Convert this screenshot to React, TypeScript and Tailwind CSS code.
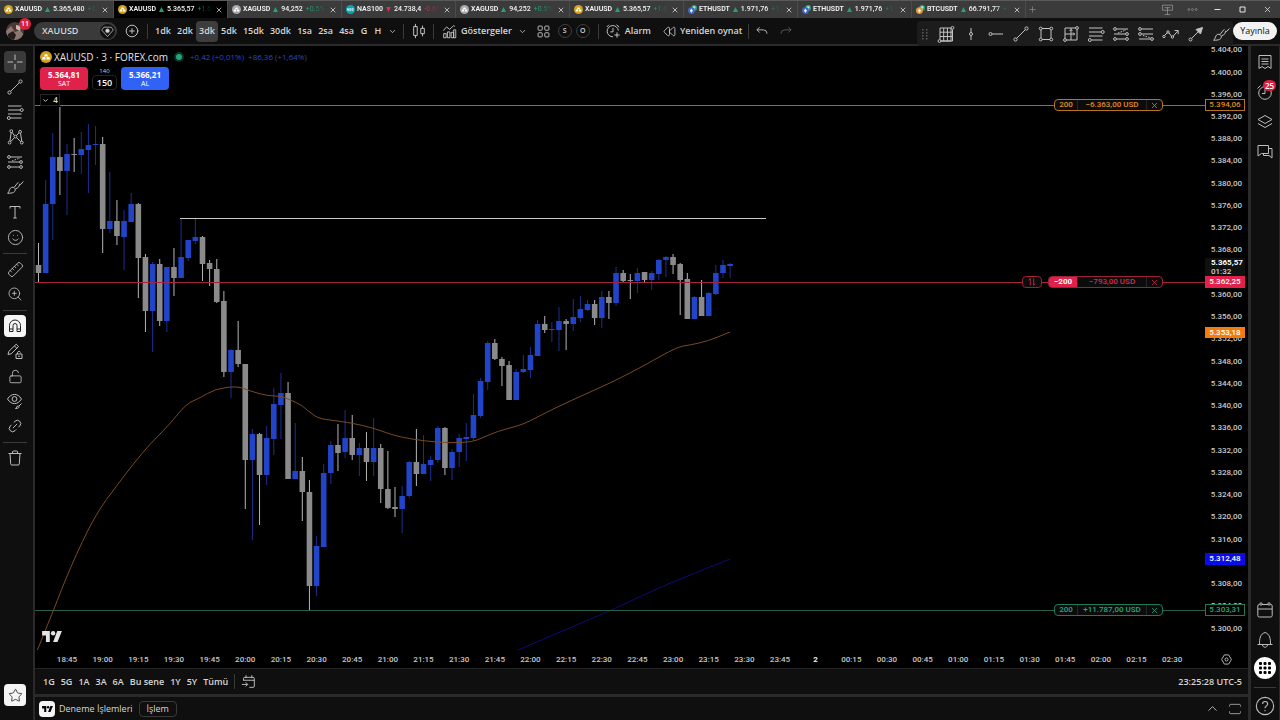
import type { ReactNode } from "react"
import { ChevronDown, ChevronUp, CirclePlus, Link2, LockOpen, Plus, Rewind, Ruler, Smile, Star, X, ZoomIn } from "lucide-react"

function Icon({ children, className = "size-[18px]" }: { children: ReactNode; className?: string }) {
  return (
    <svg viewBox="0 0 18 18" fill="none" stroke="currentColor" strokeWidth="1" className={`${className} shrink-0`} aria-hidden="true">
      {children}
    </svg>
  )
}

/* ---------- drawing tool icons ---------- */

const crossIcon = <Icon><path d="M9 1.5V7M9 11v5.5M1.5 9H7M11 9h5.5" /></Icon>

const trendIcon = (
  <Icon><circle cx="3.5" cy="14.5" r="1.6" /><circle cx="14.5" cy="3.5" r="1.6" /><path d="M4.7 13.3l8.6-8.6" /></Icon>
)

const fibIcon = (
  <Icon>
    <path d="M2 3h13.5M2 7h12M2 11h13.5M4.5 15h11" />
    <circle cx="15.7" cy="7" r="1.5" /><circle cx="2.8" cy="15" r="1.5" />
  </Icon>
)

const patternIcon = (
  <Icon>
    <path d="M3.9 13.2l1.3-8.7M6.2 4.4l2.2 3.2M10.4 7.6l2.7-2.8M14.5 5.2l1.3 8M4.8 13.6l3.6-4M10.6 9.7l4.2 4" />
    <circle cx="3.6" cy="14.6" r="1.4" /><circle cx="5.3" cy="3.2" r="1.4" /><circle cx="9.5" cy="8.6" r="1.4" />
    <circle cx="14.1" cy="3.8" r="1.4" /><circle cx="15.8" cy="14.6" r="1.4" />
  </Icon>
)

const longIcon = (
  <Icon>
    <circle cx="3" cy="4" r="1.4" /><circle cx="3" cy="14" r="1.4" /><circle cx="15" cy="14" r="1.4" />
    <path d="M4.5 4H16M4.5 14h9M2 9h11.5" /><circle cx="15" cy="9" r="1.4" /><path strokeDasharray="1.5 1.2" d="M6 8l8-3" />
  </Icon>
)

const shortIcon = (
  <Icon>
    <circle cx="3" cy="4" r="1.4" /><circle cx="3" cy="9" r="1.4" /><circle cx="15" cy="14" r="1.4" />
    <path d="M4.5 4H16M4.5 9H16M2 14h11.5" /><path strokeDasharray="1.5 1.2" d="M6 10.5l8 2.5" />
  </Icon>
)

const brushIcon = (
  <Icon>
    <path d="M1.7 15.3c2-1.8 1.4-5.2 4-6 1.7-.5 3.6.6 3.6 2.5 0 2.4-2.6 3.5-7.6 3.500zM8.3 9.3c1-1.6 2.3-3.2 4-5M9.6 11c1.5-.7 2.6-1.6 3.5-2.6l.5-2.2 1.2.2 2.5-2.9" />
  </Icon>
)

const textIcon = <Icon><path d="M4 5.5V3.5h10v2M9 3.5V15M7.3 15h3.4" /></Icon>

const magnetIcon = (
  <Icon>
    <path d="M3.5 14.5v-6a5.5 5.5 0 0 1 11 0v6H11v-6a2 2 0 0 0-4 0v6zM3.5 12H7M11 12h3.5" />
  </Icon>
)

const pencilLockIcon = (
  <Icon>
    <path d="M2 12.5l.7-3 7.500-7.300 2.300 2.300-7.300 7.300zM8.500 4l2.300 2.300M10 12h6v4.500h-6zM11.500 12v-1.500a1.600 1.600 0 0 1 3 0" />
    <circle cx="13" cy="14.2" r=".4" />
  </Icon>
)

const eyeIcon = (
  <Icon>
    <path d="M1.5 7c2-3.200 4.600-4.600 7-4.600s5 1.400 7 4.600c-2 3.200-4.600 4.600-7 4.600S3.500 10.200 1.500 7z" /><circle cx="8.5" cy="7" r="2.4" />
    <path d="M9.5 16.5c1.500-.6.8-2.500 2.500-2.500s1.800 2.500-2.500 2.500zM13 14l2.500-2.500" />
  </Icon>
)

const trashIcon = <Icon><path d="M2.5 4.5h13M6.5 4.5V3a1 1 0 0 1 1-1h3a1 1 0 0 1 1 1v1.5M4 4.5l.7 10.300a1.200 1.200 0 0 0 1.200 1.200h6.200a1.200 1.200 0 0 0 1.200-1.200L14 4.500" /></Icon>

const gannIcon = (
  <Icon>
    <path d="M3 3h11v13H3zM6.7 3v13M10.4 3v13M3 7.2h12.5M3 11.5h12.5M15.5 4.5V16H4" />
    <circle cx="15.5" cy="2.8" r="1.4" fill="#1e1e1e" /><circle cx="2.5" cy="16" r="1.4" fill="#1e1e1e" />
  </Icon>
)

const vertIcon = <Icon><circle cx="9" cy="9" r="1.5" /><path d="M9 3v4.5M9 10.5V15" /></Icon>
const rayIcon = <Icon><circle cx="3.5" cy="9" r="1.5" /><path d="M5 9h11" /></Icon>

const rectIcon = (
  <Icon>
    <path d="M4 5v8M14 5v8M5 3.5h8M5 14.5h8" />
    <circle cx="3.7" cy="3.5" r="1.4" /><circle cx="14.3" cy="3.5" r="1.4" /><circle cx="3.7" cy="14.5" r="1.4" /><circle cx="14.3" cy="14.5" r="1.4" />
  </Icon>
)

const rangeIcon = (
  <Icon>
    <path d="M3 3h10.500M15 4.500V15H4M3 3v10.500M3 9h10M9 3v12M7.500 6L9 4.500 10.500 6M11 7.500L12.500 9 11 10.500" />
    <circle cx="15" cy="3" r="1.4" /><circle cx="3" cy="15" r="1.4" />
  </Icon>
)

const zigIcon = (
  <Icon>
    <path d="M2.5 10.5l2.7-2.700M7 7.800l2.500 3.500M11.300 11l4.500-5M12.500 5.500h3.700v3.700" />
    <circle cx="2" cy="11.5" r="1.2" /><circle cx="6" cy="7" r="1.2" /><circle cx="10.4" cy="12" r="1.2" />
  </Icon>
)

const arrowIcon = (
  <Icon><circle cx="3.5" cy="14.5" r="1.5" /><path d="M4.6 13.4L14 4" /><path fill="currentColor" d="M15.5 2.5L13.5 9 9 4.5z" /></Icon>
)

/* ---------- top bar icons ---------- */

const candlesIcon = <Icon className="size-[16px]"><path d="M5 1v3M5 14v3M3 4h4v10H3zM13 3v3M13 12v3M11 6h4v6h-4z" /></Icon>
const indicatorIcon = (
  <Icon className="size-[15px]"><path d="M2 16.5v-5h3v5zM6.5 16.5v-7h3v7zM11 16.5V10h3v6.5zM14 16.5V7h2.5v9.5zM1.5 8l4-4.5 3.5 3 5-4.5 1.5 1" /></Icon>
)
const gridIcon = (
  <Icon className="size-[15px]"><rect x="2.5" y="2.5" width="5" height="5" rx="1" /><rect x="10.5" y="2.5" width="5" height="5" rx="1" /><rect x="2.5" y="10.5" width="5" height="5" rx="1" /><rect x="10.5" y="10.5" width="5" height="5" rx="1" /></Icon>
)
const alarmAddIcon = (
  <Icon className="size-[16px]"><path d="M15 8.5A6.3 6.3 0 1 0 9 15.5M9 5.5V10H6M2 4.5L4.5 2M13 2l3 2.5M13.5 10.5v6M10.5 13.5h6" /></Icon>
)
const undoIcon = <Icon className="size-[14px]"><path d="M6 4L2.5 7.5 6 11M2.5 7.5h8a5 5 0 0 1 5 5" /></Icon>
const redoIcon = <Icon className="size-[14px]"><path d="M12 4l3.5 3.5L12 11M15.5 7.5h-8a5 5 0 0 0-5 5" /></Icon>

/* ---------- right bar icons ---------- */

const listIcon = <Icon><path d="M3 2.5h12v13l-3-2-3 2-3-2-3 2zM5.5 6h7M5.5 8.5h7M5.5 11h7" /></Icon>
const alarmIcon = <Icon><circle cx="9" cy="10" r="6.3" /><path d="M9 6v4.5H6M1.5 5.5L4.5 2.5" /></Icon>
const layersIcon = <Icon><path d="M9 2.5l7 4-7 4-7-4zM2 10.500l7 4 7-4" /></Icon>
const chatIcon = <Icon><path d="M2 2.5h10.5v8h-7L2 13zM12.5 5.5H16V15l-3-2.500H7.500v-2" /></Icon>
const calendarIcon = <Icon><rect x="1.8" y="3.5" width="14.4" height="12.5" rx="1.5" /><path d="M2 8h14" /><circle cx="5" cy="3" r="1.2" fill="#0f0f0f" /><circle cx="13" cy="3" r="1.2" fill="#0f0f0f" /></Icon>
const bellIcon = <Icon><path d="M3.5 13c0-5 .5-10 5.5-11.5 5 1.5 5.5 6.5 5.5 11.500M1.500 13.500h15M6.500 14c.5 3 4.500 3 5 0" /></Icon>
const helpIcon = <Icon className="size-[20px]"><circle cx="9" cy="9" r="7.8" /><path d="M6.8 7.2c0-3 4.600-3 4.600 0 0 1.800-2.400 1.700-2.400 3.800M9 12.500v1.200" /></Icon>
const goToIcon = <Icon className="size-[15px]"><path d="M3 8V5.5A1.5 1.5 0 0 1 4.5 4h10A1.5 1.5 0 0 1 16 5.5v9a1.5 1.5 0 0 1-1.5 1.5H10M3 7.5h13M6 1.5V5M13 1.5V5M1 12.500h7M5.500 10L8 12.500 5.500 15" /></Icon>

function TvLogo({ className }: { className: string }) {
  return (
    <svg viewBox="0 0 36 20" className={className} fill="currentColor" aria-hidden="true">
      <path d="M14 20H7V8H0V0h14zM28 20h-8l7.5-20H36z" />
      <circle cx="20" cy="4" r="4" />
    </svg>
  )
}

/* ---------- tabs ---------- */

type Coin = "gold" | "silver" | "nas" | "eth" | "btc"

function CoinIcon({ coin, className = "size-[9px]" }: { coin: Coin; className?: string }) {
  if (coin === "eth" || coin === "btc") {
    return (
      <svg viewBox="0 0 10 10" className={`${className} shrink-0`} aria-hidden="true">
        <circle cx="6.8" cy="3.2" r="3.2" fill="#26a17b" />
        <path d="M5.2 2.2h3.2M6.8 2.2V5" stroke="#fff" />
        <circle cx="3.8" cy="6.2" r="3.8" fill={coin === "eth" ? "#3f68c8" : "#e8963a"} />
        <path d="M3.8 3.8l1.6 2.5-1.6 2.2-1.6-2.200z" fill="#fff" />
      </svg>
    )
  }
  const fill = coin === "gold" ? "#d3a21c" : coin === "silver" ? "#a5a7ad" : "#0aa5b5"
  return (
    <svg viewBox="0 0 12 12" className={`${className} shrink-0`} aria-hidden="true">
      <circle cx="6" cy="6" r="6" fill={fill} />
      {coin === "nas" ? (
        <path d="M2 7.5v-3l1.500 3v-3M5 4.500h1.500v3H5zM8 4.500h1.500v3H8z" stroke="#fff" strokeWidth=".8" fill="none" />
      ) : (
        <path d="M4.8 3.2h2.4L8 5.5H4zM2.7 6h2.500l.5 2.500H2zM6.800 6h2.500l.7 2.500H6.300z" fill="#fff" />
      )}
    </svg>
  )
}

const tabs: { coin: Coin; name: string; price: string; change: string; down?: boolean; active?: boolean }[] = [
  { coin: "gold", name: "XAUUSD", price: "5.365,480", change: "+1.63%" },
  { coin: "gold", name: "XAUUSD", price: "5.365,57", change: "+1.64%", active: true },
  { coin: "silver", name: "XAGUSD", price: "94,252", change: "+0.5% / 1" },
  { coin: "nas", name: "NAS100", price: "24.738,4", change: "-0.69%", down: true },
  { coin: "silver", name: "XAGUSD", price: "94,252", change: "+0.5% / 1" },
  { coin: "gold", name: "XAUUSD", price: "5.365,57", change: "+1.64%" },
  { coin: "eth", name: "ETHUSDT", price: "1.971,76", change: "+1.63%" },
  { coin: "eth", name: "ETHUSDT", price: "1.971,76", change: "+1.63%" },
  { coin: "btc", name: "BTCUSDT", price: "66.791,77", change: "+1.5%" },
]

function TabBar() {
  return (
    <div className="flex h-[18px] shrink-0 items-stretch border-t border-[#5a5a5a] bg-[#3b3b3b] font-[Roboto,sans-serif] text-[7px] text-gray-100">
      {tabs.map((t, i) => (
        <div
          key={i}
          className={`flex w-[114px] shrink-0 items-center border-r border-[#4c4c4c] pl-1 pr-1 ${t.active ? "bg-black" : ""}`}
        >
          <CoinIcon coin={t.coin} />
          <div className="ml-0.5 flex min-w-0 flex-1 items-center gap-[3px] overflow-hidden whitespace-nowrap mask-r-from-80%">
            <span className="font-semibold">{t.name}</span>
            <svg viewBox="0 0 6 6" className={`size-[5px] shrink-0 ${t.down ? "fill-[#d9304f]" : "fill-[#23a07a]"}`} aria-hidden="true">
              <path d={t.down ? "M0 0h6L3 6z" : "M0 6h6L3 0z"} />
            </svg>
            <span className="font-medium">{t.price}</span>
            <span className={t.down ? "text-[#d9304f]" : "text-[#23a07a]"}>{t.change}</span>
          </div>
          <button aria-label="Close tab" className="ml-0.5"><X size={8} /></button>
        </div>
      ))}
      <button aria-label="New tab" className="px-0.5 text-[#8a8a8a]"><Plus size={9} /></button>
      <div className="ml-auto flex items-center text-gray-200">
        <button aria-label="Panels" className="flex w-[25px] justify-center text-[#9a9a9a]">
          <Icon className="size-[13px]"><path d="M2 3h14v7H2zM9 6v10M5 16h8M5 6.5h8" /></Icon>
        </button>
        <button aria-label="More" className="flex w-[25px] justify-center text-[#9a9a9a]">
          <Icon className="size-[11px]"><circle cx="3" cy="9" r="1.6" /><circle cx="9" cy="9" r="1.6" /><circle cx="15" cy="9" r="1.6" /></Icon>
        </button>
        <button aria-label="Minimize" className="flex w-[25px] justify-center"><Icon className="size-[9px]"><path strokeWidth="2" d="M3 9h12" /></Icon></button>
        <button aria-label="Maximize" className="flex w-[25px] justify-center"><Icon className="size-[9px]"><path strokeWidth="2" d="M4 4h10v10H4z" /></Icon></button>
        <button aria-label="Close" className="flex w-[25px] justify-center"><X size={9} /></button>
      </div>
    </div>
  )
}

/* ---------- toolbar ---------- */

function Divider() {
  return <div className="h-[15px] w-px shrink-0 bg-[#3a3a3a]" />
}

const shortIntervals = ["1dk", "2dk", "3dk", "5dk"]
const midIntervals = ["15dk", "30dk"]
const hourIntervals = ["1sa", "2sa", "4sa"]

const favorites = [
  { label: "Gann box", icon: gannIcon },
  { label: "Vertical line", icon: vertIcon },
  { label: "Horizontal ray", icon: rayIcon },
  { label: "Trend line", icon: trendIcon },
  { label: "Rectangle", icon: rectIcon },
  { label: "Range", icon: rangeIcon },
  { label: "Fib retracement", icon: fibIcon },
  { label: "Long position", icon: longIcon },
  { label: "Short position", icon: shortIcon },
  { label: "Path", icon: zigIcon },
  { label: "Arrow", icon: arrowIcon },
  { label: "Brush", icon: brushIcon },
]

function Toolbar() {
  return (
    <header className="flex h-[28px] shrink-0 items-center border-b-2 border-[#2a2a2a] bg-[#0f0f0f] text-[9px] font-semibold text-[#d6d6d6]">
      <button aria-label="Account" className="relative ml-1.5 mr-2.5 size-[18px] shrink-0">
        <svg viewBox="0 0 18 18" className="size-[18px] rounded-full" aria-hidden="true">
          <rect width="18" height="18" fill="#4b3934" />
          <path d="M0 18V9l5-5 4 6 5-2 4 5v5z" fill="#8d7770" />
          <path d="M2 12l5-3 3 4-2 5H2z" fill="#241c1b" />
          <path d="M10 3l5 1-1 5-4-2z" fill="#c9b8ae" />
        </svg>
        <span className="absolute -top-1 left-[13px] flex h-[12px] w-[12px] items-center justify-center rounded-full bg-[#d9213f] text-[7px] text-white">11</span>
      </button>
      <button className="flex h-[18px] w-[83px] shrink-0 items-center justify-between rounded-full bg-[#3a3a3a] pl-2 pr-0.5 text-[9px]">
        XAUUSD
        <span className="flex size-[15px] items-center justify-center rounded-full bg-[#101010]">
          <Icon className="size-[13px]"><path d="M4 3h10l3 4-8 9-8-9z" /><circle cx="9" cy="8" r="2.5" fill="currentColor" /></Icon>
        </span>
      </button>
      <button aria-label="Compare" className="flex w-[30px] shrink-0 justify-center"><CirclePlus size={14} strokeWidth={1.5} /></button>
      <Divider />
      <div className="ml-1 flex shrink-0 items-center">
        {shortIntervals.map((n) => (
          <button key={n} className={`h-[21px] w-[22px] rounded-sm ${n === "3dk" ? "bg-[#3d3d3d]" : ""}`}>{n}</button>
        ))}
        {midIntervals.map((n) => (
          <button key={n} className="h-[21px] w-[27px]">{n}</button>
        ))}
        {hourIntervals.map((n) => (
          <button key={n} className="h-[21px] w-[21px]">{n}</button>
        ))}
        <button className="w-[14px]">G</button>
        <button className="w-[14px]">H</button>
        <button aria-label="More intervals" className="flex w-[14px] justify-center"><ChevronDown size={9} /></button>
      </div>
      <div className="ml-1 flex shrink-0 items-center">
        <Divider />
        <button aria-label="Chart type" className="flex w-[29px] justify-center">{candlesIcon}</button>
        <Divider />
        <button className="ml-2 flex items-center gap-1">{indicatorIcon}Göstergeler</button>
        <button aria-label="Favorite indicators" className="flex w-[22px] justify-center"><ChevronDown size={9} /></button>
        <button aria-label="Layouts" className="flex w-[20px] justify-center">{gridIcon}</button>
        <button className="ml-1 size-[14px] rounded-full border border-[#3f3f3f] text-[7px] leading-3">S</button>
        <button className="ml-1 size-[14px] rounded-full border border-[#3f3f3f] text-[7px] leading-3">O</button>
        <div className="w-2" />
        <Divider />
        <button className="ml-1.5 flex items-center gap-1">{alarmAddIcon}Alarm</button>
        <button className="ml-3 flex items-center gap-1">
          <Rewind size={13} strokeWidth={1.5} />
          Yeniden oynat
        </button>
        <div className="w-1.5" />
        <Divider />
        <button aria-label="Undo" className="ml-1.5 flex w-[14px] justify-center">{undoIcon}</button>
        <button aria-label="Redo" className="ml-2.5 flex w-[14px] justify-center text-[#666]">{redoIcon}</button>
      </div>
      <div className="relative z-10 -mb-0.5 ml-auto flex h-[25px] shrink-0 items-center self-end rounded-sm bg-[#1c1c1c] pl-1 text-[#c4c4c4]">
        <svg viewBox="0 0 8 12" className="mr-1 h-[12px] w-[8px] fill-[#5a5a5a]" aria-hidden="true">
          {[1, 4, 7, 10].map((y) => (
            <path key={y} d={`M1 ${y}h1.5v1.5H1zM5 ${y}h1.5v1.5H5z`} />
          ))}
        </svg>
        {favorites.map((f) => (
          <button key={f.label} aria-label={f.label} className="flex h-[24px] w-[25px] items-center justify-center">{f.icon}</button>
        ))}
      </div>
      <button className="mr-[3px] h-[18px] w-[44px] shrink-0 rounded-full bg-[#f2f2f2] text-[9px] font-medium text-[#111]">Yayınla</button>
    </header>
  )
}

/* ---------- side bars ---------- */

const toolGroups = [
  [
    { label: "Cross", icon: crossIcon },
    { label: "Trend line", icon: trendIcon },
    { label: "Fibonacci", icon: fibIcon },
    { label: "Patterns", icon: patternIcon },
    { label: "Projection", icon: longIcon },
    { label: "Brush", icon: brushIcon },
    { label: "Text", icon: textIcon },
    { label: "Emoji", icon: <Smile size={17} strokeWidth={1.3} /> },
  ],
  [
    { label: "Measure", icon: <Ruler size={17} strokeWidth={1.3} className="-scale-x-100" /> },
    { label: "Zoom", icon: <ZoomIn size={16} strokeWidth={1.3} /> },
  ],
  [
    { label: "Magnet", icon: magnetIcon },
    { label: "Lock drawing mode", icon: pencilLockIcon },
    { label: "Lock drawings", icon: <LockOpen size={15} strokeWidth={1.4} /> },
    { label: "Hide drawings", icon: eyeIcon },
    { label: "Link drawings", icon: <Link2 size={16} strokeWidth={1.4} className="-rotate-45" /> },
  ],
  [{ label: "Remove", icon: trashIcon }],
]

function toolStyle(label: string) {
  if (label === "Cross") return "bg-[#3a3a3a]"
  if (label === "Magnet") return "bg-[#f5f5f5] text-[#222]"
  return ""
}

function LeftBar() {
  return (
    <nav className="flex w-[35px] shrink-0 flex-col items-center gap-[3px] border-r-2 border-[#2a2a2a] bg-[#0f0f0f] pr-[3px] pt-[5px] text-[#bdbdbd]">
      {toolGroups.map((group, g) => (
        <div key={g} className="flex flex-col items-center gap-[3px]">
          {g > 0 && <div className="mb-px mt-0.5 h-px w-[24px] bg-[#3a3a3a]" />}
          {group.map((t) => (
            <button key={t.label} aria-label={t.label} className={`flex size-[22px] items-center justify-center rounded ${toolStyle(t.label)}`}>
              {t.icon}
            </button>
          ))}
        </div>
      ))}
      <button aria-label="Favorites" className="mb-3.5 mt-auto flex size-[22px] items-center justify-center rounded bg-[#f5f5f5] text-[#222]">
        <Star size={15} strokeWidth={1.3} />
      </button>
    </nav>
  )
}

function RightBar() {
  return (
    <nav className="flex w-[32px] shrink-0 flex-col items-center border-l-[3px] border-r border-[#2a2a2a] bg-[#0f0f0f] pb-1 pt-px text-[#bdbdbd]">
      <button aria-label="Watchlist" className="flex h-[30px] items-center">{listIcon}</button>
      <button aria-label="Alerts" className="relative flex h-[30px] items-center">
        {alarmIcon}
        <span className="absolute left-[7px] top-[3px] flex h-[11px] w-[13px] items-center justify-center rounded-full bg-[#d9213f] text-[8px] font-semibold text-white">25</span>
      </button>
      <button aria-label="Layers" className="flex h-[30px] items-center">{layersIcon}</button>
      <button aria-label="Chats" className="flex h-[30px] items-center">{chatIcon}</button>
      <button aria-label="Calendar" className="mt-auto flex h-[30px] items-center">{calendarIcon}</button>
      <button aria-label="Notifications" className="flex h-[30px] items-center">{bellIcon}</button>
      <button aria-label="Products" className="mb-1 mt-0.5 flex size-[22px] items-center justify-center rounded-full bg-white text-black">
        <svg viewBox="0 0 12 12" className="size-[12px]" fill="currentColor" aria-hidden="true">
          {[0, 4.5, 9].map((x) => [0, 4.5, 9].map((y) => <rect key={`${x}-${y}`} x={x} y={y} width="3" height="3" rx="1" />))}
        </svg>
      </button>
      <div className="mb-2 mt-1 h-px w-[22px] bg-[#3a3a3a]" />
      <button aria-label="Help">{helpIcon}</button>
    </nav>
  )
}

/* ---------- chart ---------- */

// up?, body top, body bottom, wick top, wick bottom
const candles: [number, number, number, number, number][] = [
  [0, 265, 273, 243, 283], [1, 204, 273, 180, 273], [1, 157, 204, 133, 240], [0, 157, 171, 107, 195], [1, 154, 171, 144, 215],
  [0, 154, 155, 138, 172], [1, 149, 155, 132, 174], [1, 145, 150, 124, 193], [1, 144, 145, 126, 165], [0, 144, 229, 137, 253],
  [1, 221, 229, 172, 233], [0, 221, 236, 200, 245], [1, 221, 237, 210, 270], [1, 204, 222, 193, 222], [0, 204, 258, 203, 298],
  [0, 257, 311, 254, 332], [1, 264, 311, 262, 352], [0, 264, 321, 259, 326], [1, 267, 321, 267, 332], [0, 267, 278, 248, 296],
  [1, 257, 278, 219, 278], [1, 240, 258, 240, 261], [1, 237, 241, 219, 244], [0, 237, 264, 236, 281], [0, 263, 269, 260, 286],
  [0, 269, 302, 259, 303], [0, 301, 372, 291, 377], [1, 350, 372, 349, 398], [0, 350, 364, 321, 367], [0, 364, 460, 364, 509],
  [1, 434, 460, 429, 540], [0, 434, 475, 433, 525], [1, 438, 475, 426, 485], [1, 404, 439, 388, 455], [1, 393, 405, 373, 439],
  [0, 393, 479, 382, 479], [1, 471, 479, 423, 479], [0, 471, 492, 457, 521], [0, 492, 586, 480, 610], [1, 546, 586, 536, 596],
  [1, 473, 547, 464, 547], [1, 445, 473, 441, 484], [0, 445, 453, 424, 471], [1, 438, 452, 410, 458], [0, 438, 455, 415, 460],
  [1, 448, 455, 443, 476], [0, 448, 462, 432, 481], [1, 448, 462, 418, 476], [0, 448, 489, 444, 503], [0, 489, 508, 451, 509],
  [0, 507, 509, 487, 517], [1, 496, 509, 486, 533], [1, 462, 496, 461, 498], [0, 462, 474, 429, 486], [1, 464, 474, 435, 474],
  [1, 460, 465, 456, 481], [1, 428, 460, 426, 463], [0, 428, 468, 427, 475], [1, 452, 468, 449, 480], [1, 438, 452, 434, 467],
  [1, 437, 439, 423, 461], [1, 415, 438, 394, 440], [1, 381, 416, 378, 418], [1, 343, 382, 341, 390], [0, 343, 359, 339, 360],
  [0, 359, 366, 357, 386], [0, 365, 400, 361, 400], [1, 372, 400, 369, 400], [1, 369, 372, 355, 373], [1, 355, 370, 347, 378],
  [1, 324, 356, 320, 356], [0, 324, 330, 316, 333], [1, 329, 330, 322, 342], [1, 321, 330, 307, 351], [0, 321, 324, 319, 350],
  [1, 317, 324, 299, 331], [1, 309, 318, 296, 322], [1, 304, 310, 300, 311], [0, 304, 318, 300, 325], [1, 297, 318, 291, 328],
  [0, 297, 303, 291, 319], [1, 273, 303, 267, 306], [0, 273, 281, 270, 283], [0, 280, 281, 274, 299], [1, 273, 281, 268, 293],
  [0, 272, 280, 272, 283], [1, 273, 280, 271, 290], [1, 260, 274, 259, 280], [1, 257, 260, 256, 277], [0, 257, 265, 254, 274],
  [0, 264, 280, 263, 315], [0, 279, 319, 273, 319], [1, 297, 319, 296, 319], [0, 297, 316, 280, 316], [1, 293, 316, 292, 316],
  [1, 273, 294, 265, 295], [1, 265, 273, 260, 278], [1, 264, 266, 263, 278],
]

const maPoints: [number, number][] = [
  [37, 651], [54, 609], [70, 568], [95, 515], [118, 484], [134, 463], [150, 444], [170, 424], [186, 404], [200, 398], [215, 389], [237, 386],
  [250, 391], [268, 396], [282, 396], [290, 400], [302, 405], [316, 418], [330, 420], [352, 423], [373, 428], [387, 433], [400, 437], [424, 441],
  [450, 443], [472, 442], [482, 438], [498, 431], [518, 426], [530, 421], [545, 413], [570, 401], [608, 384], [630, 373], [645, 365], [677, 347],
  [690, 345], [708, 341], [730, 332],
]

const fastPoints: [number, number][] = [[516, 651], [560, 632], [612, 610], [660, 587], [730, 559]]

// rounds the corners of a polyline by running curves between segment midpoints
function smoothPath(points: [number, number][]) {
  let d = `M${points[0].join(" ")}`
  for (let i = 1; i < points.length - 1; i++) {
    const [x, y] = points[i]
    const [nx, ny] = points[i + 1]
    d += `Q${x} ${y} ${(x + nx) / 2} ${(y + ny) / 2}`
  }
  return `${d}L${points[points.length - 1].join(" ")}`
}

// the chart's top left corner within the window
const LEFT = 35
const TOP = 46

const candleX = (i: number) => 38.5 + 7.13 * i
const priceY = (p: number) => 71.5 + (5400 - p) * 5.56 - TOP
const formatPrice = (p: number) => `5.${p - 5000},00`

// 5364 sits under the countdown label
const prices = Array.from({ length: 27 }, (_, i) => 5404 - i * 4).filter((p) => p !== 5364)

const times = [
  "18:45", "19:00", "19:15", "19:30", "19:45", "20:00", "20:15", "20:30", "20:45", "21:00", "21:15", "21:30", "21:45", "22:00", "22:15", "22:30",
  "22:45", "23:00", "23:15", "23:30", "23:45", "2", "00:15", "00:30", "00:45", "01:00", "01:15", "01:30", "01:45", "02:00", "02:15", "02:30",
]

function Plot() {
  return (
    <svg className="h-full min-w-0 flex-1" role="img" aria-label="XAUUSD price chart">
      <g transform={`translate(${-LEFT} ${-TOP})`}>
        {candles.map(([up, top, bottom, high, low], i) => {
          const x = candleX(i)
          return (
            <g key={i}>
              <rect x={x - 0.5} y={high} width="1" height={low - high} fill={up ? "#1c2f8f" : "#b4b4b4"} />
              <rect x={x - 2.8} y={top} width="5.6" height={bottom - top} fill={up ? "#2144c8" : "#8a8a8a"} />
            </g>
          )
        })}
        <path d={smoothPath(maPoints)} fill="none" stroke="#7a4a22" />
        <path d={smoothPath(fastPoints)} fill="none" stroke="#0b0b7c" />
        <path d="M180 218.5H766" stroke="#c8c8c8" />
      </g>
    </svg>
  )
}

function PriceAxis() {
  return (
    <svg className="h-full w-[43px] shrink-0 font-[Roboto,sans-serif]" role="img" aria-label="Price scale">
      {prices.map((p) => (
        <text key={p} x="37" y={priceY(p) + 3} textAnchor="end" fontSize="8" fontWeight="500" fill="#c8c8c8">
          {formatPrice(p)}
        </text>
      ))}
    </svg>
  )
}

const orders = [
  { y: 105, qty: "200", pnl: "−6.363,00 USD", price: "5.394,06", line: "bg-[#a8691d]", tag: "border-[#b8731e] text-[#e08c22] bg-[#0c0c0c]", label: "border border-[#b8731e] bg-black text-[#e08c22]" },
  { y: 282, qty: "−200", pnl: "−793,00 USD", price: "5.362,25", line: "bg-[#a3223f]", tag: "border-[#9c2039] text-[#d12c50] bg-[#0c0c0c]", label: "bg-[#e0224a] text-white", filled: true },
  { y: 610, qty: "200", pnl: "+11.787,00 USD", price: "5.303,31", line: "bg-[#2a5f49]", tag: "border-[#1f7a57] text-[#2aa878] bg-[#0c0c0c]", label: "border border-[#1f7a57] bg-black text-[#2aa878]" },
]

function Orders() {
  return orders.map((o) => (
    <div
      key={o.price}
      className="absolute inset-x-0 flex h-[12px] items-center pr-[3px] font-[Roboto,sans-serif] text-[8px] font-medium leading-[10px]"
      style={{ top: o.y - TOP - 6 }}
    >
      <div className={`h-px flex-1 ${o.line}`} />
      {o.filled && (
        <>
          <button aria-label="Reverse position" className={`flex h-[12px] w-[20px] items-center justify-center rounded-sm border ${o.tag}`}>
            <Icon className="size-[10px]"><path strokeWidth="1.5" d="M3 6l3-3v12M15 12l-3 3V3" /></Icon>
          </button>
          <div className={`h-px w-1.5 ${o.line}`} />
        </>
      )}
      <div className={`flex h-[12px] items-center overflow-hidden rounded-sm border ${o.tag}`}>
        <span className={o.filled ? "w-[28px] bg-[#e0224a] text-center font-bold text-white" : "w-[22px] text-center"}>{o.qty}</span>
        <span className="w-[70px] border-x border-[#262626] text-center">{o.pnl}</span>
        <button aria-label="Close order" className="flex w-[15px] justify-center"><X size={9} /></button>
      </div>
      <div className={`h-px w-[42px] ${o.line}`} />
      <span className={`flex h-[12px] w-[40px] items-center justify-center ${o.label}`}>{o.price}</span>
    </div>
  ))
}

function Legend() {
  return (
    <div className="absolute left-[5px] top-[5px] flex flex-col">
      <div className="flex h-[12px] items-center whitespace-nowrap text-[10px] font-medium text-[#e2e2e2]">
        <CoinIcon coin="gold" className="size-[12px]" />
        <span className="ml-0.5">XAUUSD · 3 · FOREX.com</span>
        <span className="ml-2 size-[6px] rounded-full bg-[#22a67a] ring-2 ring-[#0c3326]" />
        <span className="ml-2 text-[8px] text-[#2848c8]">+0,42 (+0,01%)</span>
        <span className="ml-1 text-[8px] text-[#2848c8]">+86,36 (+1,64%)</span>
      </div>
      <div className="mt-1 flex items-center gap-1 text-white">
        <button className="flex h-[23px] w-[48px] flex-col items-center justify-center rounded bg-[#e0224a] text-[8px] font-bold leading-[9px]">
          5.364,81<span className="text-[7px] font-normal">SAT</span>
        </button>
        <div className="flex w-[25px] flex-col items-center">
          <span className="text-[6px] leading-[8px] text-[#c8c8c8]">140</span>
          <button className="h-[15px] w-[25px] rounded border border-[#242424] text-[9px] font-semibold leading-[13px]">150</button>
        </div>
        <button className="flex h-[23px] w-[48px] flex-col items-center justify-center rounded bg-[#2f62f5] text-[8px] font-bold leading-[9px]">
          5.366,21<span className="text-[7px] font-normal">AL</span>
        </button>
      </div>
      <button className="mt-1 flex h-[12px] w-[20px] items-center justify-center gap-1 border border-[#242424] bg-black text-[8px] font-semibold text-[#dcdcdc]">
        <ChevronDown size={7} strokeWidth={3} />4
      </button>
    </div>
  )
}

function Chart() {
  return (
    <section className="flex min-h-0 flex-1 flex-col bg-black">
      <div className="relative flex min-h-0 flex-1">
        <Plot />
        <PriceAxis />
        <div
          className="absolute right-[3px] flex h-[19px] w-[40px] flex-col bg-[#101010] pl-1.5 font-[Roboto,sans-serif] text-[8px] leading-[9px]"
          style={{ top: 258 - TOP }}
        >
          <span className="font-bold text-white">5.365,57</span>
          <span className="font-medium text-[#d0d0d0]">01:32</span>
        </div>
        <span className="absolute right-[3px] flex h-[11px] w-[40px] items-center justify-center bg-[#f57c0a] font-[Roboto,sans-serif] text-[8px] font-medium text-white" style={{ top: 327 - TOP }}>5.353,18</span>
        <span className="absolute right-[3px] flex h-[12px] w-[40px] items-center justify-center bg-[#0b0be8] font-[Roboto,sans-serif] text-[8px] font-medium text-white" style={{ top: 553 - TOP }}>5.312,48</span>
        <Orders />
        <Legend />
        <TvLogo className="absolute bottom-[8px] left-[7px] h-[11px] w-[20px] text-[#e4e4e4]" />
      </div>
      <div className="flex h-[18px] shrink-0 items-center">
        <svg className="h-[18px] min-w-0 flex-1 font-[Roboto,sans-serif]" role="img" aria-label="Time scale">
          {times.map((t, i) => (
            <text key={t} x={candleX(4 + i * 5) - LEFT} y="12" textAnchor="middle" fontSize="8" fontWeight={t === "2" ? 700 : 500} fill={t === "2" ? "#eee" : "#c8c8c8"}>
              {t}
            </text>
          ))}
        </svg>
        <button aria-label="Scale settings" className="mr-4 text-[#c2c2c2]">
          <Icon className="size-[11px]"><path strokeWidth="1.5" d="M5.5 1.5h7L17 9l-4.5 7.5h-7L1 9z" /><circle cx="9" cy="9" r="2.5" strokeWidth="1.5" /></Icon>
        </button>
      </div>
    </section>
  )
}

/* ---------- bottom ---------- */

const ranges = ["1G", "5G", "1A", "3A", "6A", "Bu sene", "1Y", "5Y", "Tümü"]

function RangeBar() {
  return (
    <div className="flex h-[26px] shrink-0 items-center border-t border-[#242424] bg-[#0f0f0f] pl-2 pr-1.5 text-[9px] font-semibold text-[#d6d6d6]">
      <div className="flex items-center gap-[6px]">
        {ranges.map((r) => (
          <button key={r}>{r}</button>
        ))}
        <Divider />
        <button aria-label="Go to date">{goToIcon}</button>
      </div>
      <button className="ml-auto">23:25:28 UTC-5</button>
    </div>
  )
}

function TradePanel() {
  return (
    <footer className="flex h-[26px] shrink-0 items-center border-t-[3px] border-[#2a2a2a] bg-[#0f0f0f] pl-1 pr-1.5 text-[9px] font-medium text-[#d6d6d6]">
      <span className="flex size-[16px] items-center justify-center rounded bg-[#f5f5f5] text-black"><TvLogo className="h-[6px] w-[11px]" /></span>
      <span className="ml-1">Deneme İşlemleri</span>
      <button className="ml-1.5 h-[16px] w-[38px] rounded border border-[#3a3a3a] leading-[14px]">İşlem</button>
      <div className="ml-auto flex items-center gap-2 text-[#bdbdbd]">
        <button aria-label="Open panel"><ChevronUp size={15} strokeWidth={1.5} /></button>
        <button aria-label="Maximize panel">
          <Icon className="size-[14px]"><path d="M2 6V4.500A1.500 1.500 0 0 1 3.500 3h11A1.500 1.500 0 0 1 16 4.500V6M2 12v1.500A1.500 1.500 0 0 0 3.500 15h11a1.500 1.500 0 0 0 1.500-1.500V12" /></Icon>
        </button>
      </div>
    </footer>
  )
}

export default function App() {
  return (
    <div className="flex h-screen flex-col overflow-hidden bg-[#0f0f0f] font-['Open_Sans',sans-serif]">
      <TabBar />
      <Toolbar />
      <div className="flex min-h-0 flex-1">
        <LeftBar />
        <main className="flex min-w-0 flex-1 flex-col">
          <Chart />
          <RangeBar />
          <TradePanel />
        </main>
        <RightBar />
      </div>
    </div>
  )
}
